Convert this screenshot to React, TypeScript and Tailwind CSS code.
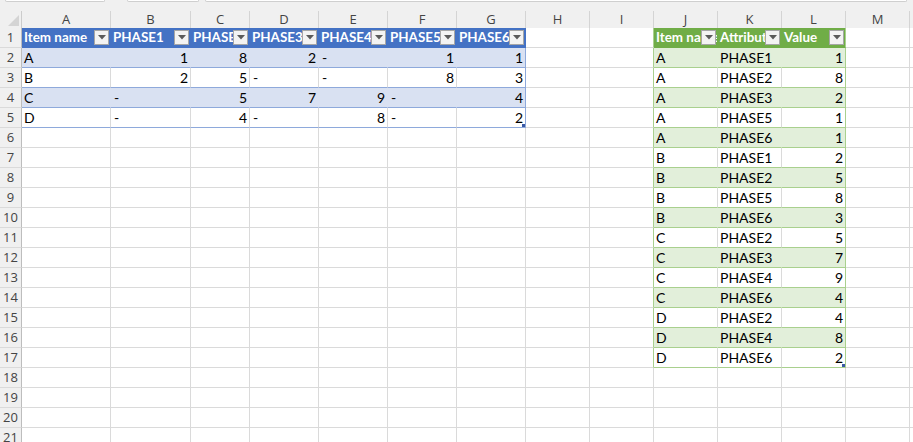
import React from "react";

const colW = [
  "w-[22px]",
  "w-[89px]",
  "w-[80px]",
  "w-[59px]",
  "w-[69px]",
  "w-[69px]",
  "w-[69px]",
  "w-[69px]",
  "w-[64px]",
  "w-[64px]",
  "w-[64px]",
  "w-[64px]",
  "w-[64px]",
  "w-[64px]",
  "w-[64px]",
];
const letters = ["A", "B", "C", "D", "E", "F", "G", "H", "I", "J", "K", "L", "M", ""];

type V = string | number | null;

const t1: V[][] = [
  ["Item name", "PHASE1", "PHASE2", "PHASE3", "PHASE4", "PHASE5", "PHASE6"],
  ["A", 1, 8, 2, null, 1, 1],
  ["B", 2, 5, null, null, 8, 3],
  ["C", null, 5, 7, 9, null, 4],
  ["D", null, 4, null, 8, null, 2],
];

const t2: V[][] = [
  ["Item name", "Attribute", "Value"],
  ["A", "PHASE1", 1],
  ["A", "PHASE2", 8],
  ["A", "PHASE3", 2],
  ["A", "PHASE5", 1],
  ["A", "PHASE6", 1],
  ["B", "PHASE1", 2],
  ["B", "PHASE2", 5],
  ["B", "PHASE5", 8],
  ["B", "PHASE6", 3],
  ["C", "PHASE2", 5],
  ["C", "PHASE3", 7],
  ["C", "PHASE4", 9],
  ["C", "PHASE6", 4],
  ["D", "PHASE2", 4],
  ["D", "PHASE4", 8],
  ["D", "PHASE6", 2],
];

function FilterBtn() {
  return (
    <div className="absolute right-[1px] top-[2px] w-[15px] h-[15px] bg-[#f3f3f3] border border-[#a6a6a6] flex items-center justify-center">
      <svg width="8" height="5" viewBox="0 0 8 5">
        <polygon points="0,0 8,0 4,4.5" fill="#5a5a5a" />
      </svg>
    </div>
  );
}

function Handle() {
  return <div className="absolute right-0 bottom-0 w-[3px] h-[3px] bg-[#3b5aa5]" />;
}

type CellInfo = {
  text: string;
  kind: "text" | "num" | "dash" | "header" | "none";
  bg: string;
  br: string;
  bb: string;
  filter?: boolean;
  handle?: boolean;
};

function cellInfo(r: number, c: number): CellInfo {
  const def: CellInfo = { text: "", kind: "none", bg: "bg-white", br: "border-r-[#dadada]", bb: "border-b-[#dadada]" };
  if (r >= 1 && r <= 5 && c >= 1 && c <= 7) {
    const v = t1[r - 1][c - 1];
    if (r === 1) {
      return {
        text: String(v),
        kind: "header",
        bg: "bg-[#4472c4]",
        br: "border-r-[#4472c4]",
        bb: "border-b-[#4472c4]",
        filter: true,
      };
    }
    const band = r % 2 === 0;
    return {
      text: v === null ? "-" : String(v),
      kind: v === null ? "dash" : typeof v === "number" ? "num" : "text",
      bg: band ? "bg-[#d9e1f2]" : "bg-white",
      br: c === 7 ? "border-r-[#8ea9db]" : band ? "border-r-[#d9e1f2]" : "border-r-[#dadada]",
      bb: "border-b-[#8ea9db]",
      handle: r === 5 && c === 7,
    };
  }
  if (r >= 1 && r <= 17 && c >= 10 && c <= 12) {
    const v = t2[r - 1][c - 10];
    if (r === 1) {
      return {
        text: String(v),
        kind: "header",
        bg: "bg-[#70ad47]",
        br: c === 12 ? "border-r-[#a9d08e]" : "border-r-[#70ad47]",
        bb: "border-b-[#70ad47]",
        filter: true,
      };
    }
    const band = r % 2 === 0;
    return {
      text: String(v),
      kind: typeof v === "number" ? "num" : "text",
      bg: band ? "bg-[#e2efda]" : "bg-white",
      br: c === 12 ? "border-r-[#a9d08e]" : band ? "border-r-[#e2efda]" : "border-r-[#dadada]",
      bb: "border-b-[#a9d08e]",
      handle: r === 17 && c === 12,
    };
  }
  if (r >= 1 && r <= 17 && c === 9) {
    return { ...def, br: "border-r-[#a9d08e]" };
  }
  return def;
}

function Cell({ r, c }: { r: number; c: number }) {
  const info = cellInfo(r, c);
  const base = `relative shrink-0 h-[20px] border-r border-b overflow-hidden flex items-center whitespace-nowrap ${colW[c]} ${info.bg} ${info.br} ${info.bb}`;
  let inner: React.ReactNode = null;
  if (info.kind === "header") {
    inner = <span className="pl-[2px] text-white font-bold text-[13.4px]">{info.text}</span>;
  } else if (info.kind === "num") {
    inner = <span className="ml-auto pr-[2px] text-black text-[14px]">{info.text}</span>;
  } else if (info.kind === "dash") {
    inner = <span className="pl-[3px] text-black text-[14px]">{info.text}</span>;
  } else if (info.kind === "text") {
    inner = <span className="pl-[2px] text-black text-[14px]">{info.text}</span>;
  }
  return (
    <div className={base}>
      {inner}
      {info.filter && <FilterBtn />}
      {info.handle && <Handle />}
    </div>
  );
}

export default function App() {
  const rows = Array.from({ length: 21 }, (_, i) => i + 1);
  const cols = Array.from({ length: 14 }, (_, i) => i + 1);
  return (
    <div className="w-[913px] h-[442px] overflow-hidden bg-white font-['Lato',sans-serif]">
      <div className="h-[11px] bg-[#f0f0f0] flex items-start">
        <div className="ml-[5px] w-[100px] h-[2px] bg-white border-x border-b border-[#cfcfcf] rounded-b-[2px]" />
        <div className="ml-[22px] w-[72px] h-[2px] bg-white border-x border-b border-[#cfcfcf] rounded-b-[2px]" />
        <div className="ml-[6px] w-[702px] h-[2px] bg-white border-x border-b border-[#cfcfcf] rounded-b-[2px]" />
      </div>
      <div className="flex h-[17px] bg-[#f0f0f0]">
        <div className="relative shrink-0 w-[22px] h-[17px] border-r border-[#cccccc]">
          <svg className="absolute right-[2px] bottom-[2px]" width="11" height="11" viewBox="0 0 11 11">
            <polygon points="11,0 11,11 0,11" fill="#d4d4d4" />
          </svg>
        </div>
        {letters.map((l, i) => (
          <div
            key={i}
            className={`shrink-0 h-[17px] border-r border-[#d4d4d4] flex items-center justify-center text-[13px] text-[#444444] font-['Open_Sans',sans-serif] ${colW[i + 1]}`}
          >
            {l}
          </div>
        ))}
      </div>
      {rows.map((r) => (
        <div key={r} className="flex h-[20px]">
          <div className="shrink-0 w-[22px] h-[20px] bg-[#f0f0f0] border-r border-r-[#bdbdbd] border-b border-b-[#dadada] flex items-center justify-center text-[13px] text-[#444444] font-['Open_Sans',sans-serif]">
            {r}
          </div>
          {cols.map((c) => (
            <Cell key={c} r={r} c={c} />
          ))}
        </div>
      ))}
    </div>
  );
}
